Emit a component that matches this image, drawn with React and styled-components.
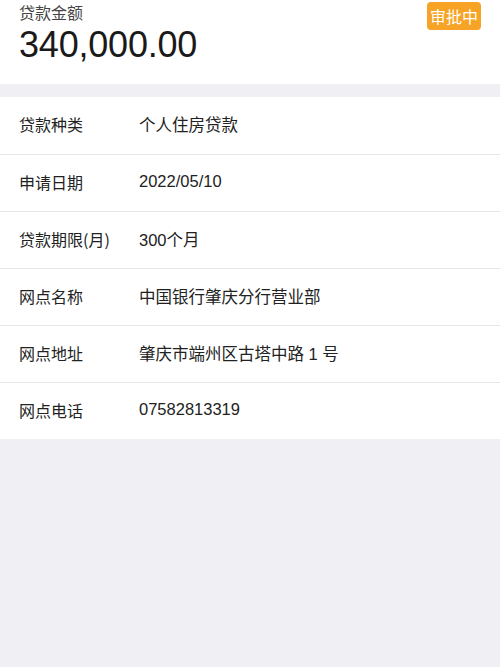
import styled, { createGlobalStyle } from "styled-components";

const GlobalStyle = createGlobalStyle`
  html, body {
    margin: 0;
    padding: 0;
    background: #efeff4;
    font-family: "Noto Sans CJK SC", "Noto Sans", sans-serif;
  }
`;

const Page = styled.div`
  min-height: 667px;
  background: #efeff4;
`;

const Header = styled.header`
  position: relative;
  background: #fff;
  height: 84px;
  padding: 0 19px;
  box-sizing: border-box;
`;

const AmountLabel = styled.div`
  padding-top: 1px;
  font-size: 16px;
  line-height: 22px;
  color: #444;
`;

const Amount = styled.div`
  font-family: "Liberation Sans", "Noto Sans", sans-serif;
  font-size: 36px;
  line-height: 44px;
  color: #1a1a1a;
  letter-spacing: -0.2px;
`;

const Badge = styled.span`
  position: absolute;
  top: 2px;
  right: 19px;
  background: #f7a325;
  color: #fff;
  font-size: 16px;
  line-height: 28px;
  padding: 0 3px;
  border-radius: 4px;
`;

const List = styled.section`
  margin-top: 13px;
  background: #fff;
`;

const Row = styled.div`
  display: flex;
  align-items: center;
  height: 57px;
  padding: 0 19px 3px;
  box-sizing: border-box;
  border-top: ${(p) => (p.$first ? "none" : "1px solid #e6e6ea")};
  font-size: 16px;
  color: #222;
`;

const Label = styled.span`
  width: 120px;
  flex-shrink: 0;
`;

const Value = styled.span`
  font-family: "Liberation Sans", "Noto Sans CJK SC", sans-serif;
  font-size: 16.5px;
`;

const rows = [
  ["贷款种类", "个人住房贷款"],
  ["申请日期", "2022/05/10"],
  ["贷款期限(月)", "300个月"],
  ["网点名称", "中国银行肇庆分行营业部"],
  ["网点地址", "肇庆市端州区古塔中路 1 号"],
  ["网点电话", "07582813319"],
];

export default function App() {
  return (
    <Page>
      <GlobalStyle />
      <Header>
        <AmountLabel>贷款金额</AmountLabel>
        <Amount>340,000.00</Amount>
        <Badge>审批中</Badge>
      </Header>
      <List>
        {rows.map(([label, value], i) => (
          <Row key={label} $first={i === 0}>
            <Label>{label}</Label>
            <Value>{value}</Value>
          </Row>
        ))}
      </List>
    </Page>
  );
}
